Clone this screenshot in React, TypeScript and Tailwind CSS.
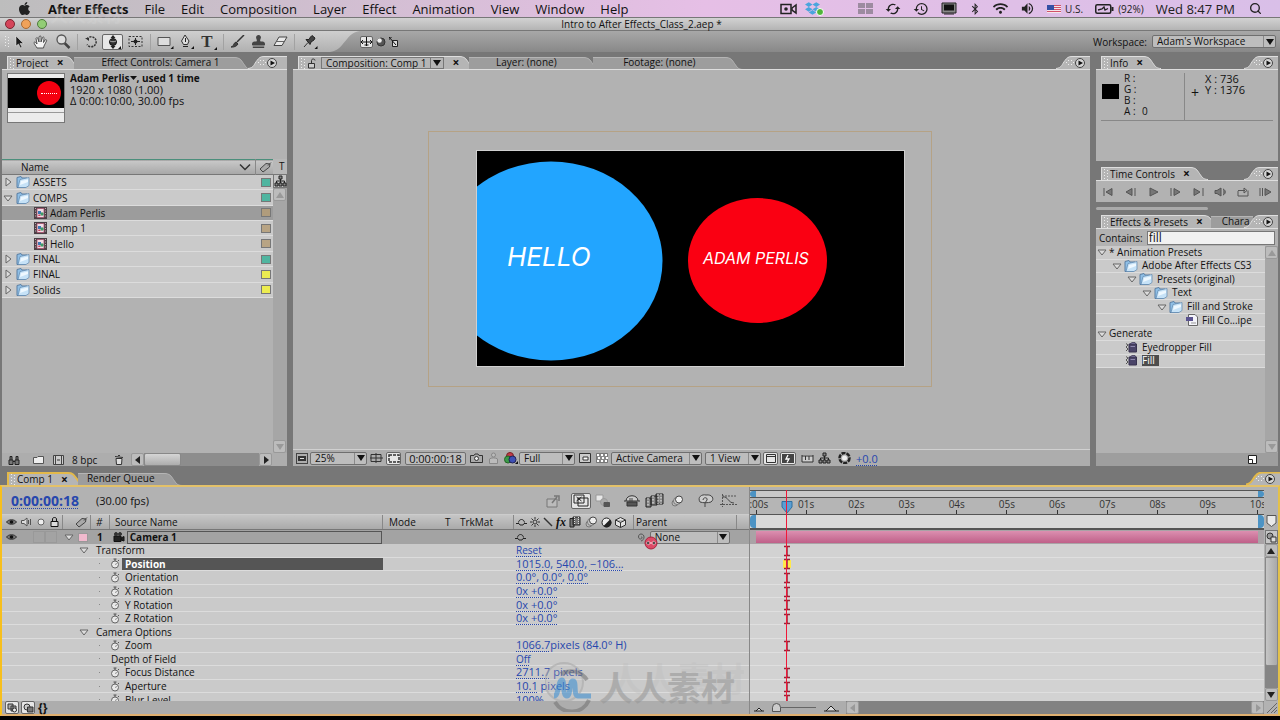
import type { ReactNode } from "react";
import clsx from "clsx";
import { FaApple, FaDropbox, FaBluetoothB, FaStamp, FaWifi } from "react-icons/fa";
import { FiSearch } from "react-icons/fi";
import { IoMdVolumeHigh } from "react-icons/io";
import { MdSync, MdHistory } from "react-icons/md";

const menus = ["File", "Edit", "Composition", "Layer", "Effect", "Animation", "View", "Window", "Help"];

const projectItems = [
  { name: "ASSETS", kind: "folder", open: false, color: "bg-[#4fb5a0]" },
  { name: "COMPS", kind: "folder", open: true, color: "bg-[#4fb5a0]" },
  { name: "Adam Perlis", kind: "comp", color: "bg-[#b09c7c]", selected: true },
  { name: "Comp 1", kind: "comp", color: "bg-[#b8a484]" },
  { name: "Hello", kind: "comp", color: "bg-[#b8a484]" },
  { name: "FINAL", kind: "folder", open: false, color: "bg-[#4fb5a0]" },
  { name: "FINAL", kind: "folder", open: false, color: "bg-[#ecec50]" },
  { name: "Solids", kind: "folder", open: false, color: "bg-[#ecec50]" },
];

const effects = [
  { name: "* Animation Presets", pad: "pl-0", kind: "group" },
  { name: "Adobe After Effects CS3", pad: "pl-[15px]", kind: "folder" },
  { name: "Presets (original)", pad: "pl-[30px]", kind: "folder" },
  { name: "Text", pad: "pl-[45px]", kind: "folder" },
  { name: "Fill and Stroke", pad: "pl-[60px]", kind: "folder" },
  { name: "Fill Co...ipe", pad: "pl-[89px]", kind: "preset" },
  { name: "Generate", pad: "pl-0", kind: "group" },
  { name: "Eyedropper Fill", pad: "pl-[28px]", kind: "effect" },
  { name: "Fill", pad: "pl-[28px]", kind: "effect", selected: true },
];

type Prop = { name: string; kind: "group" | "prop" | "plain"; values?: string[]; tail?: string; key?: boolean; selected?: boolean };

const props: Prop[] = [
  { name: "Transform", kind: "group", values: ["Reset"] },
  { name: "Position", kind: "prop", values: ["1015.0", "540.0", "−106..."], key: true, selected: true },
  { name: "Orientation", kind: "prop", values: ["0.0°", "0.0°", "0.0°"], key: true },
  { name: "X Rotation", kind: "prop", values: ["0x +0.0°"], key: true },
  { name: "Y Rotation", kind: "prop", values: ["0x +0.0°"], key: true },
  { name: "Z Rotation", kind: "prop", values: ["0x +0.0°"], key: true },
  { name: "Camera Options", kind: "group" },
  { name: "Zoom", kind: "prop", values: ["1066.7"], tail: "pixels (84.0° H)", key: true },
  { name: "Depth of Field", kind: "plain", values: ["Off"] },
  { name: "Focus Distance", kind: "prop", values: ["2711.7"], tail: " pixels", key: true },
  { name: "Aperture", kind: "prop", values: ["10.1"], tail: " pixels", key: true },
  { name: "Blur Level", kind: "prop", values: ["100%"], key: true },
];

const seconds = ["0:00s", "01s", "02s", "03s", "04s", "05s", "06s", "07s", "08s", "09s", "10s"];

/* ---------- icons ---------- */

const Icon = ({ w = 14, h = 12, children }: { w?: number; h?: number; children: ReactNode }) => (
  <svg width={w} height={h} viewBox={`0 0 ${w} ${h}`} fill="none" stroke="#333" strokeWidth="1" className="shrink-0">
    {children}
  </svg>
);

const Twirl = ({ open }: { open?: boolean }) => (
  <Icon w={10} h={10}>
    <path d={open ? "M1 3H9L5 8Z" : "M3 1V9L8 5Z"} fill="#dcdcdc" stroke="#666" />
  </Icon>
);

const Folder = () => (
  <Icon w={14} h={12}>
    <path d="M1 1.500L5 .5L6 2H11V10L9 11.500H1Z" fill="#8fbfe6" stroke="#5b7fa3" />
    <path d="M4 3.500L13 1.500V9.500L10 11.500H2Z" fill="#c6e2f7" stroke="#5f87ad" strokeWidth="0.7" />
    <path d="M5 5L12 3.500V6L4 9Z" fill="#eef8ff" stroke="none" />
  </Icon>
);

const CompIcon = () => (
  <Icon w={13} h={12}>
    <path d="M0 0H13V12H0Z" fill="#4a3f45" stroke="none" />
    <path d="M3 1.500H10V10.500H3Z" fill="#f3dce4" stroke="#a5506c" strokeWidth="0.800" />
    <path d="M4 4H7V7H4Z" fill="#3c78b4" stroke="none" />
    <circle cx="8" cy="7" r="1.700" fill="#3f9a66" stroke="none" />
    <path d="M5 7L7 9H4Z" fill="#c9405f" stroke="none" />
    <path d="M1.500 1V11M11.500 1V11" stroke="#b9aeb2" strokeDasharray="1 1.500" />
  </Icon>
);

const PresetIcon = () => (
  <Icon w={12} h={12}>
    <path d="M2.500 .5H9L11.500 3V11.500H2.500Z" fill="#f4f4fa" stroke="#666" />
    <path d="M0 3H7V7H0Z" fill="#5a5390" stroke="none" />
    <path d="M5 9H10" stroke="#999" />
  </Icon>
);

const EffectIcon = () => (
  <Icon w={13} h={11}>
    <path d="M4 2H11.500V10H4Z" fill="#4a4468" stroke="#38334f" />
    <path d="M1 1.500L3 3L1 5L3 7L1 9" stroke="#555" />
    <path d="M5 2L7 .5H10L11 2" fill="#6d6790" stroke="#38334f" strokeWidth="0.700" />
    <path d="M5.500 4.500H10" stroke="#8f89ae" />
  </Icon>
);

const Stopwatch = () => (
  <Icon w={10} h={11}>
    <circle cx="5" cy="6.500" r="3.500" fill="#e9e9e9" stroke="#666" />
    <path d="M5 3V1M3.500 1H6.500M8 3L9 2" stroke="#555" />
    <path d="M5 6.500L7 5.500" stroke="#777" strokeWidth="0.800" />
  </Icon>
);

const Eye = () => (
  <Icon w={11} h={8}>
    <path d="M.5 4C2.500 1 8.500 1 10.500 4C8.500 7 2.500 7 .5 4Z" fill="#777" stroke="#333" />
    <circle cx="5.500" cy="4" r="1.800" fill="#111" stroke="none" />
  </Icon>
);

const TagIcon = () => (
  <Icon w={13} h={11}>
    <path d="M1 7L7 1.500L11 2L10.500 5L4 10Z" fill="#a9a9a9" stroke="#444" />
    <path d="M9 3.500L12 .5" stroke="#444" />
  </Icon>
);

const Shy = () => (
  <Icon w={11} h={8}>
    <path d="M0 5.500H3L4 7H7L8 5.500H11" stroke="#222" />
    <path d="M2.500 4.500C3 .5 8 .5 8.500 4.500" stroke="#222" />
  </Icon>
);

const FilmIcon = () => (
  <Icon w={12} h={12}>
    <path d="M1 2.500H5V11H1ZM4 1H11V9H4Z" fill="#777" stroke="#222" />
    <path d="M5.500 1V9M9.500 1V9" stroke="#ddd" strokeDasharray="1 1" />
  </Icon>
);

const BlurBalls = () => (
  <Icon w={14} h={12}>
    <circle cx="5" cy="8" r="3" fill="#bbb" stroke="#777" />
    <circle cx="7" cy="6" r="3.500" fill="#ccc" stroke="#777" />
    <circle cx="9" cy="4.500" r="3.500" fill="#eee" stroke="#444" />
  </Icon>
);

const FlowChart = () => (
  <Icon w={13} h={12}>
    <path d="M5 1H8V4H5ZM1 8H4V11H1ZM5 8H8V11H5ZM9 8H12V11H9Z" fill="#888" stroke="#222" />
    <path d="M6.500 4V8M2.500 8V6H10.500V8" stroke="#222" />
  </Icon>
);

const Arrow = ({ dir }: { dir: "up" | "down" | "left" | "right" }) => {
  const d = { up: "M4 1L8 7H0Z", down: "M0 1H8L4 7Z", left: "M6 0V8L1 4Z", right: "M2 0V8L7 4Z" };
  return (
    <svg width="8" height="8" viewBox="0 0 8 8" className="shrink-0" fill="currentColor">
      <path d={d[dir]} />
    </svg>
  );
};

/* ---------- shared pieces ---------- */

const Grip = () => (
  <svg width="6" height="11" viewBox="0 0 6 11" className="mx-px shrink-0" fill="#eee">
    {[1, 4, 7, 10].map((y) => (
      <path key={y} d={`M1 ${y - 1}h1v1h-1zM4 ${y}h1v1h-1z`} />
    ))}
  </svg>
);

const Slope = ({ fill = "#b5b5b5", edge = "#dedede" }: { fill?: string; edge?: string }) => (
  <svg width="18" height="13" viewBox="0 0 18 13" className="shrink-0">
    <path d="M0 .5C6 .5 7 3 9.500 6.500C12 10 13 12.500 18 13H0Z" fill={fill} />
    <path d="M0 .5C6 .5 7 3 9.500 6.500C12 10 13 12.500 18 12.500" fill="none" stroke={edge} />
  </svg>
);

const PanelMenu = ({ gold = false, className = "ml-auto" }: { gold?: boolean; className?: string }) => (
  <button aria-label="Panel menu" className={clsx("block h-[13px] shrink-0", className)}>
    <svg width="34" height="13" viewBox="0 0 34 13">
      <path d="M0 13C6 12 6 8 9 4.500C11 2 12 .5 16 .5H34V13Z" fill="#b5b5b5" />
      <path d="M0 12.500C6 12 6 8 9 4.500C11 2 12 .5 16 .5H34" fill="none" stroke={gold ? "#e3b94a" : "#dedede"} strokeWidth={gold ? 2 : 1} />
      <path d="M10 6h1v1h-1zM12 4h1v1h-1zM12 8h1v1h-1zM15 4h1v1h-1zM15 8h1v1h-1zM17 6h1v1h-1z" fill="#eee" />
      <circle cx="24" cy="7" r="4.500" fill="#d5d5d5" stroke="#444" />
      <path d="M22.500 4.500V9.500L27 7Z" fill="#111" />
    </svg>
  </button>
);

const Tab = ({ children }: { children: ReactNode }) => (
  <div className="flex h-[13px] shrink-0">
    <div className="flex items-center border-t border-l border-[#dedede] bg-[#b5b5b5]">
      <Grip />
      {children}
      <button aria-label="Close tab" className="ml-2 text-[12px] leading-3 font-bold">
        ×
      </button>
    </div>
    <Slope />
  </div>
);

const IdleTab = ({ label, className }: { label: string; className?: string }) => (
  <div className="-ml-2 flex h-3">
    <button className={clsx("border-t border-[#b5b5b5] bg-[#9d9d9d] pb-[2px] leading-[9px] whitespace-nowrap", className)}>{label}</button>
    <Slope fill="#9d9d9d" edge="#b5b5b5" />
  </div>
);

const Select = ({ value, label, className }: { value: string; label: string; className?: string }) => (
  <div className={clsx("relative flex h-[13px] shrink-0 items-center rounded-xs border border-[#6f6f6f] bg-[#bdbdbd]", className)}>
    <select aria-label={label} className="h-full w-full appearance-none pr-3 pl-1 leading-[11px] outline-none">
      <option>{value}</option>
    </select>
    <span className="pointer-events-none absolute inset-y-0 right-0 flex w-3 items-center justify-center border-l border-[#8a8a8a]">
      <Arrow dir="down" />
    </span>
  </div>
);

const ToolButton = ({ label, on, children, className }: { label: string; on?: boolean; children: ReactNode; className?: string }) => (
  <button
    aria-label={label}
    className={clsx("flex shrink-0 items-center justify-center", on && "rounded-xs border border-[#666] bg-[#e6e6e6]", className)}
  >
    {children}
  </button>
);

const ScrollButton = ({ dir, dim }: { dir: "up" | "down" | "left" | "right"; dim?: boolean }) => (
  <button
    aria-label={`Scroll ${dir}`}
    className={clsx("flex h-[13px] w-[13px] shrink-0 items-center justify-center rounded-xs border border-[#999] bg-[#bcbcbc]", dim ? "text-[#999]" : "text-[#222]")}
  >
    <Arrow dir={dir} />
  </button>
);

const Link = ({ children, className }: { children: ReactNode; className?: string }) => (
  <a href="#" className={clsx("text-[#2747ad] underline decoration-dotted decoration-1 underline-offset-2", className)}>
    {children}
  </a>
);

/* ---------- top bars ---------- */

const MenuBar = () => (
  <header className="flex h-[18px] items-center border-b border-[#777] bg-linear-to-r from-[#bdbdbd] via-[#e6bfe6] via-55% to-[#d9bfe8] pr-[18px] pl-[17px] text-[13px] font-medium">
    <button aria-label="Apple menu" className="mr-4">
      <FaApple size={15} className="text-[#222]" />
    </button>
    <nav className="flex items-center gap-4">
      <button className="font-bold">After Effects</button>
      {menus.map((m) => (
        <button key={m}>{m}</button>
      ))}
    </nav>
    <div className="ml-auto flex items-center gap-3 text-[#222]">
      <div className="mr-[26px] flex items-center gap-2">
        <Icon w={17} h={12}>
          <path d="M1 1.500H11V10.500H1Z" strokeWidth="1.500" stroke="#222" />
          <circle cx="6" cy="6" r="1.800" fill="#222" stroke="none" />
          <path d="M12 5L16 2V10L12 7Z" fill="none" stroke="#222" strokeWidth="1.500" />
        </Icon>
        <span className="relative">
          <FaDropbox size={15} className="text-[#4aa5dd]" />
          <span className="absolute -right-1 bottom-0 h-2 w-2 rounded-full border border-white bg-[#4fb53a]" />
        </span>
      </div>
      <div className="grid grid-cols-2 gap-px">
        {[0, 1, 2, 3].map((i) => (
          <span key={i} className="h-[5px] w-[7px] bg-[#9c8ba0]" />
        ))}
      </div>
      <MdSync size={16} className="rotate-90" />
      <MdHistory size={16} />
      <Icon w={16} h={13}>
        <path d="M1 1H15V11H1Z" stroke="#222" fill="#888" />
        <path d="M3 2.500H13V8.500H3Z" fill="#111" stroke="none" />
        <path d="M3 12H13" stroke="#222" />
      </Icon>
      <FaBluetoothB size={12} />
      <FaWifi size={15} />
      <IoMdVolumeHigh size={15} />
      <span className="flex items-center gap-1 text-[10px]">
        <Icon w={14} h={8}>
          <path d="M0 0H14V8H0Z" fill="#f4e6ea" stroke="none" />
          <path d="M0 .5H14M0 2.500H14M0 4.500H14M0 6.500H14" stroke="#d2526a" />
          <path d="M0 0H7V5H0Z" fill="#3550a5" stroke="none" />
        </Icon>
        U.S.
      </span>
      <span className="flex items-center gap-1 text-[10px]">
        <Icon w={19} h={10}>
          <rect x=".75" y=".75" width="15" height="8.500" rx="1.500" stroke="#222" strokeWidth="1.500" />
          <path d="M17.500 3V7" stroke="#222" strokeWidth="2" />
          <path d="M3 6L7 5L9 3L10 6L13 4.500" stroke="#222" strokeWidth="1.300" />
        </Icon>
        (92%)
      </span>
      <span className="pr-[2px] text-[13px]">Wed 8:47 PM</span>
      <FiSearch size={13} strokeWidth={2.5} />
    </div>
  </header>
);

const TitleBar = () => (
  <div className="flex h-[13px] items-center border-b border-[#777] bg-linear-to-b from-[#d2d2d2] to-[#b4b4b4] pl-[5px]">
    <div className="flex w-12 gap-[6px]">
      <button aria-label="Close" className="h-[10px] w-[10px] rounded-full border border-[#7b2732] bg-[#d5455a]" />
      <button aria-label="Minimize" className="h-[10px] w-[10px] rounded-full border border-[#a86a33] bg-[#f0a25a]" />
      <button aria-label="Zoom" className="h-[10px] w-[10px] rounded-full border border-[#4f7a3c] bg-[#92cd75]" />
    </div>
    <h1 className="flex-1 pr-[50px] text-center leading-3 font-medium">Intro to After Effects_Class_2.aep *</h1>
  </div>
);

const Divider = () => <span className="mx-[3px] h-4 w-px shrink-0 bg-[#a2a2a2]" />;

const ToolBar = () => (
  <div className="flex h-[21px] items-center bg-linear-to-b from-[#a8a8a8] to-[#888]">
    <div className="flex h-full items-center bg-linear-to-b from-[#cfcfcf] to-[#b0b0b0] pl-[3px]">
      <Grip />
      <ToolButton label="Selection" className="w-[17px]">
        <Icon w={10} h={14}>
          <path d="M1 1V11L3.500 9L5.500 13L7 12L5 8.500H8.500Z" fill="#1c1c1c" stroke="#eee" strokeWidth="0.500" />
        </Icon>
      </ToolButton>
      <ToolButton label="Hand" className="w-[24px]">
        <Icon w={15} h={14}>
          <path d="M4 13C3 11 1 9 1 7.500C1.500 6.500 3 7.500 4 9L3 3.500C3.500 2 5 2.500 5 4L6 7V2C6.500 .5 8 .5 8 2V7L9.500 2.500C10 1.500 11.500 2 11 3.500L10.500 7.500L12 5C13 4 14 5 13.500 6L11 11L10.500 13Z" fill="#f3f3f3" stroke="#444" strokeWidth="0.900" />
        </Icon>
      </ToolButton>
      <ToolButton label="Zoom" className="w-[22px]">
        <Icon w={15} h={15}>
          <path d="M8.500 9L13.500 14" stroke="#444" strokeWidth="2.500" />
          <circle cx="5.500" cy="5.500" r="4.500" fill="#ddd" stroke="#555" strokeWidth="1.300" />
        </Icon>
      </ToolButton>
      <Divider />
      <ToolButton label="Rotate" className="w-[21px]">
        <Icon w={13} h={13}>
          <path d="M2 4A5 5 0 1 1 2 9.500" stroke="#333" strokeWidth="1.500" strokeDasharray="2 1" />
          <path d="M0 3H4V6Z" fill="#333" stroke="none" />
        </Icon>
      </ToolButton>
      <ToolButton label="Orbit camera" on className="h-4 w-[21px]">
        <Icon w={18} h={14}>
          <path d="M9 0L11.500 3H6.500ZM9 14L11.500 11H6.500Z" fill="#222" stroke="none" />
          <circle cx="9" cy="7" r="3.500" fill="#333" stroke="#111" />
          <path d="M6 6C8 7 10 7 12 6" stroke="#ccc" strokeWidth="0.800" />
          <path d="M14 14H17V11Z" fill="#111" stroke="none" />
        </Icon>
      </ToolButton>
      <ToolButton label="Pan behind" className="w-[24px]">
        <Icon w={15} h={13}>
          <path d="M1 1.500H14V11.500H1Z" stroke="#333" strokeDasharray="2 1.500" />
          <circle cx="7.500" cy="6.500" r="2" fill="#222" stroke="none" />
          <path d="M3 6.500H12M7.500 3V10" stroke="#222" />
        </Icon>
      </ToolButton>
      <Divider />
      <ToolButton label="Rectangle" className="w-[22px]">
        <Icon w={17} h={14}>
          <path d="M1 2.500H13V10.500H1Z" fill="#ddd" stroke="#555" />
          <path d="M13.500 14H16.500V11Z" fill="#111" stroke="none" />
        </Icon>
      </ToolButton>
      <ToolButton label="Pen" className="w-[22px]">
        <Icon w={15} h={14}>
          <path d="M5 0L9 6L7.500 9.500H3.500L1.500 6Z" fill="#ddd" stroke="#333" />
          <path d="M5.500 3V7M3 11.500H8" stroke="#222" />
          <path d="M11 14H14V11Z" fill="#111" stroke="none" />
        </Icon>
      </ToolButton>
      <button aria-label="Type" className="flex w-[22px] items-end justify-center font-['Liberation_Serif',serif] text-[17px] leading-4 font-bold text-[#333]">
        T
        <svg width="3" height="3" viewBox="0 0 3 3" className="ml-px">
          <path d="M0 3H3V0Z" fill="#111" />
        </svg>
      </button>
      <Divider />
      <ToolButton label="Brush" className="w-[21px]">
        <Icon w={15} h={13}>
          <path d="M14 0L7 7" stroke="#333" strokeWidth="1.500" />
          <path d="M1 12C4 12 3 8 6 7L8 9C7 11 4 12.500 1 12Z" fill="#444" stroke="#333" />
        </Icon>
      </ToolButton>
      <ToolButton label="Clone stamp" className="w-[21px]">
        <FaStamp size={13} className="text-[#444]" />
      </ToolButton>
      <ToolButton label="Eraser" className="w-[22px]">
        <Icon w={15} h={11}>
          <path d="M6 1H14L9 9.500H1Z" fill="#e8e8e8" stroke="#444" />
          <path d="M3.500 5.500H11.500" stroke="#666" />
        </Icon>
      </ToolButton>
      <Divider />
      <ToolButton label="Puppet pin" className="w-[26px]">
        <Icon w={16} h={14}>
          <path d="M1 12L5 7.500" stroke="#333" />
          <path d="M3 4.500L7 9.500L8 7L11 5L12 3L9 .5L7.500 2L6 4.500Z" fill="#444" stroke="#222" />
          <path d="M11.500 14H14.500V11Z" fill="#111" stroke="none" />
        </Icon>
      </ToolButton>
    </div>
    <svg width="36" height="21" viewBox="0 0 36 21" className="shrink-0">
      <defs>
        <linearGradient id="bar" x1="0" y1="0" x2="0" y2="1">
          <stop offset="0" stopColor="#cfcfcf" />
          <stop offset="1" stopColor="#b0b0b0" />
        </linearGradient>
      </defs>
      <path d="M0 0H36C22 1 20 20 6 21H0Z" fill="url(#bar)" />
    </svg>
    <ToolButton label="Local axis" on className="h-3 w-[13px]">
      <Icon w={11} h={10}>
        <path d="M5.500 0V9M0 5H11M2 3L0 5L2 7M9 3L11 5L9 7M3.500 8H7.500" stroke="#111" />
      </Icon>
    </ToolButton>
    <ToolButton label="World axis" className="w-[15px]">
      <Icon w={10} h={10}>
        <circle cx="5" cy="5" r="4" fill="#555" stroke="#333" />
        <circle cx="3.500" cy="3.500" r="2.300" fill="#eee" stroke="none" />
      </Icon>
    </ToolButton>
    <ToolButton label="View axis" className="w-[12px]">
      <Icon w={10} h={10}>
        <path d="M3.500 3.500H8.500V9.500H3.500Z" fill="#ddd" stroke="#222" />
        <path d="M0 0L7 8M0 3V0H3" stroke="#111" />
      </Icon>
    </ToolButton>
    <label className="ml-auto flex items-center gap-[5px] pr-1">
      Workspace:
      <Select label="Workspace" value="Adam's Workspace" className="w-[124px]" />
    </label>
  </div>
);

/* ---------- project panel ---------- */

const ProjectPanel = () => (
  <section className="flex w-[285px] shrink-0 flex-col">
    <div className="flex h-[13px] items-end pl-[5px]">
      <Tab>Project</Tab>
      <IdleTab label="Effect Controls: Camera 1" className="w-[160px] pl-[14px]" />
      <PanelMenu className="-ml-1" />
      <span className="h-[13px] flex-1 border-t border-[#dedede] bg-[#b5b5b5]" />
    </div>
    <div className="flex min-h-0 flex-1 flex-col border-t border-[#dedede] bg-[#b2b2b2]">
      <div className="flex h-[89px] gap-[5px] pt-[3px] pl-[5px]">
        <div className="flex h-[50px] w-[58px] flex-col border border-[#777] bg-[#ececec]">
          <div className="mt-1 flex h-[30px] items-center justify-end bg-black pr-[3px]">
            <div className="flex h-6 w-6 items-center justify-center rounded-full bg-[#f50010]">
              <span className="w-4 border-t border-dotted border-white" />
            </div>
          </div>
          <div className="mt-1 h-px bg-[#999]" />
        </div>
        <div className="text-[11px] leading-[11px]">
          <p className="flex items-center text-[10px] font-bold">
            Adam Perlis
            <svg width="7" height="5" viewBox="0 0 7 5" fill="#111">
              <path d="M0 0H7L3.500 4Z" />
            </svg>
            , used 1 time
          </p>
          <p>1920 x 1080 (1.00)</p>
          <p>Δ 0:00:10:00, 30.00 fps</p>
        </div>
      </div>
      <div className="flex min-h-0 flex-1">
        <div className="min-w-0 flex-1 overflow-hidden">
          <table className="w-full table-fixed border-collapse text-left">
            <thead>
              <tr className="h-[15px] border-t border-b border-t-[#4c8f7c] border-b-[#777] bg-linear-to-b from-[#c8c8c8] to-[#a8a8a8]">
                <th className="border-r border-[#888] p-0 pl-[19px] font-medium">
                  <span className="flex items-center justify-between pr-1 leading-[13px]">
                    Name
                    <Icon w={12} h={8}>
                      <path d="M1 1.500L6 6.500L11 1.500" strokeWidth="1.500" />
                    </Icon>
                  </span>
                </th>
                <th className="w-[18px] p-0 pl-[3px]" aria-label="Label">
                  <TagIcon />
                </th>
              </tr>
            </thead>
          </table>
          <table className="h-[123px] w-full table-fixed border-collapse">
            <tbody>
              {projectItems.map((item, i) => (
                <tr key={i} className={clsx("border-b border-[#dcdcdc]", item.selected ? "bg-[#9c9c9c]" : "bg-[#cacaca]")}>
                  <td className="p-0">
                    <span className={clsx("flex items-center gap-[3px] leading-[14px]", item.kind === "folder" ? "pl-px" : "pl-[32px]")}>
                      {item.kind === "folder" ? (
                        <>
                          <Twirl open={item.open} />
                          <Folder />
                        </>
                      ) : (
                        <CompIcon />
                      )}
                      {item.name}
                    </span>
                  </td>
                  <td className="w-3 p-0">
                    <span className={clsx("block h-[9px] w-[10px] border border-[#777]", item.color)} />
                  </td>
                </tr>
              ))}
            </tbody>
          </table>
        </div>
        <div className="flex w-[14px] flex-col bg-[#a6a6a6]">
          <div className="h-[15px] bg-[#b8b8b8] pl-[6px] leading-[15px] font-medium">T</div>
          <ToolButton label="Flowchart" className="h-[14px] border border-[#777] bg-[#c4c4c4]">
            <FlowChart />
          </ToolButton>
          <ScrollButton dir="up" dim />
          <div className="flex-1" />
          <ScrollButton dir="down" dim />
        </div>
      </div>
      <div className="flex h-[13px] items-center bg-[#adadad] pl-[5px]">
        <ToolButton label="Find" className="w-[14px]">
          <Icon w={12} h={10}>
            <path d="M1 5H5V9.500H1ZM7 5H11V9.500H7ZM2 5V1.500H4V5M8 5V1.500H10V5M5 6.500H7" fill="#777" stroke="#222" />
          </Icon>
        </ToolButton>
        <ToolButton label="New folder" className="ml-3 w-[10px]">
          <Icon w={11} h={9}>
            <path d="M.5 2.500H4L5 1.500H10.500V8.500H.5Z" fill="#eee" stroke="#555" />
          </Icon>
        </ToolButton>
        <ToolButton label="New composition" className="mr-2 ml-[10px] w-[11px]">
          <Icon w={11} h={10}>
            <path d="M.5 .5H10.500V9.500H.5ZM2.500 .5V9.500M8.500 .5V9.500" fill="#ccc" stroke="#444" />
            <path d="M4 5H7" />
          </Icon>
        </ToolButton>
        8 bpc
        <ToolButton label="Delete" className="mr-[7px] ml-[18px] w-[9px]">
          <Icon w={9} h={10}>
            <path d="M1 3.500H7L6.500 9.500H1.500Z" fill="#ddd" stroke="#333" />
            <path d="M0 1.500L8 2.500M3 .5H5" stroke="#333" />
          </Icon>
        </ToolButton>
        <ScrollButton dir="left" />
        <div className="h-[13px] flex-1 bg-[#8d8d8d]">
          <div className="h-[13px] w-[37px] rounded-xs border border-[#888] bg-linear-to-b from-[#d5d5d5] to-[#adadad]" />
        </div>
        <ScrollButton dir="right" />
        <div className="w-[15px]" />
      </div>
    </div>
  </section>
);

/* ---------- composition viewer ---------- */

const CompPanel = () => (
  <section className="flex min-w-0 flex-1 flex-col">
    <div className="flex h-[13px] items-end pl-[5px]">
      <Tab>
        <Icon w={9} h={11}>
          <path d="M1.500 5.500H7.500V10H1.500Z" fill="#ccc" />
          <path d="M4.500 5V2.500C4.500 .5 8 .5 8 2.500" />
        </Icon>
        <button className="ml-[5px] flex h-3 items-center border border-[#777] pl-1 leading-[10px]">
          Composition: Comp 1
          <span className="ml-1 flex h-full items-center border-l border-[#777] px-[2px]">
            <Arrow dir="down" />
          </span>
        </button>
      </Tab>
      <IdleTab label="Layer: (none)" className="w-[114px]" />
      <IdleTab label="Footage: (none)" className="w-[132px]" />
      <PanelMenu />
    </div>
    <div className="flex min-h-0 flex-1 flex-col border-t border-[#dedede] bg-[#b2b2b2]">
      <div className="flex min-h-0 flex-1 items-center justify-center pr-6 pb-[2px]">
        <svg width="504" height="256" viewBox="0 0 504 256" fontFamily="Inter, sans-serif" fontStyle="italic" fontWeight="400" fill="#fff">
          <rect x=".5" y=".5" width="503" height="255" fill="none" stroke="#b5a285" />
          <clipPath id="stage">
            <rect x="49" y="20" width="428" height="216" />
          </clipPath>
          <rect x="48.500" y="19.500" width="428" height="216" fill="#000" stroke="#d0d0d0" />
          <g clipPath="url(#stage)">
            <ellipse cx="123" cy="130" rx="111.500" ry="99.500" fill="#22a5ff" />
            <ellipse cx="329.500" cy="129.500" rx="69.500" ry="62.500" fill="#fa0012" />
            <text x="79" y="135" fontSize="26">
              HELLO
            </text>
            <text x="275" y="133" fontSize="16">
              ADAM PERLIS
            </text>
          </g>
        </svg>
      </div>
      <div className="flex h-[17px] items-center border-t border-[#d0d0d0] bg-[#adadad] pl-[3px]">
        <ToolButton label="Always preview" className="h-[11px] w-3 border border-[#444]">
          <Icon w={8} h={7}>
            <path d="M0 1H8V6H0Z" fill="#333" stroke="none" />
            <path d="M2 3.500H6" stroke="#ddd" />
          </Icon>
        </ToolButton>
        <Select label="Magnification" value="25%" className="ml-[2px] w-[57px]" />
        <ToolButton label="Grid" className="ml-[3px]">
          <Icon w={13} h={10}>
            <path d="M1 1.500H11V8.500H1ZM6 0V10M0 5H13" />
          </Icon>
        </ToolButton>
        <ToolButton label="Mask outline" on className="mr-1 ml-[3px] h-[13px] w-[15px]">
          <Icon w={12} h={9}>
            <path d="M1 1H11V8H1Z" strokeDasharray="3 1" strokeWidth="1.500" />
          </Icon>
        </ToolButton>
        <button className="h-[13px] w-[61px] rounded-xs border border-[#6f6f6f] bg-[#bdbdbd] text-center text-[11px] leading-[11px]">0:00:00:18</button>
        <ToolButton label="Snapshot" className="ml-1">
          <Icon w={13} h={10}>
            <path d="M.5 2.500H4L5 1H8L9 2.500H12.500V9.500H.5Z" fill="#aaa" />
            <circle cx="6.500" cy="5.500" r="2" fill="#eee" />
          </Icon>
        </ToolButton>
        <ToolButton label="Show snapshot" className="ml-[5px]">
          <Icon w={11} h={12}>
            <circle cx="5.500" cy="3" r="2" stroke="#888" fill="#bbb" />
            <path d="M1.500 11.500V7C3 5.500 8 5.500 9.500 7V11.500Z" stroke="#888" fill="#bbb" />
          </Icon>
        </ToolButton>
        <ToolButton label="Show channel" className="mr-px ml-[5px]">
          <Icon w={14} h={12}>
            <circle cx="6" cy="4" r="3.500" fill="#c23a4a" stroke="#722" />
            <circle cx="4" cy="7.500" r="3.500" fill="#3a9a4a" stroke="#262" />
            <circle cx="8.500" cy="7.500" r="3.500" fill="#3d4fb5" stroke="#225" />
            <path d="M11 12H14V9Z" fill="#111" stroke="none" />
          </Icon>
        </ToolButton>
        <Select label="Resolution" value="Full" className="w-[56px]" />
        <ToolButton label="Region of interest" className="ml-1">
          <Icon w={12} h={10}>
            <path d="M.5 .5H11.500V9.500H.5Z" fill="#ccc" />
            <path d="M4 4H9V7H4Z" fill="#fff" />
          </Icon>
        </ToolButton>
        <ToolButton label="Transparency grid" className="mr-[3px] ml-[5px]">
          <Icon w={12} h={10}>
            <path d="M.5 .5H11.500V9.500H.5Z" fill="#888" stroke="#777" />
            <path d="M1 2H11M2 5H12M1 8H11" stroke="#fff" strokeWidth="2" strokeDasharray="2 2" />
          </Icon>
        </ToolButton>
        <Select label="3D view" value="Active Camera" className="w-[91px]" />
        <Select label="View layout" value="1 View" className="ml-[3px] w-[56px]" />
        <ToolButton label="Pixel aspect" on className="ml-[2px] h-[13px] w-[15px]">
          <Icon w={10} h={9}>
            <path d="M.5 .5H9.500V8.500H.5ZM.5 2.500H9.500" />
          </Icon>
        </ToolButton>
        <ToolButton label="Fast previews" on className="ml-[2px] h-[13px] w-4">
          <Icon w={12} h={9}>
            <path d="M0 0H12V9H0Z" fill="#444" stroke="none" />
            <path d="M6 1L4 5H7L5 8.500" stroke="#fff" strokeWidth="1.300" />
          </Icon>
        </ToolButton>
        <ToolButton label="Timeline" className="ml-[5px]">
          <Icon w={13} h={9}>
            <path d="M1 1V8H12V1M4.500 2V6M8 2V6M1 2H12" fill="#ccc" />
          </Icon>
        </ToolButton>
        <ToolButton label="Flowchart" className="ml-1">
          <FlowChart />
        </ToolButton>
        <ToolButton label="Exposure" className="mr-[5px] ml-[7px]">
          <Icon w={13} h={12}>
            <circle cx="6.500" cy="6" r="5" strokeWidth="2.500" strokeDasharray="4 1" stroke="#222" />
            <circle cx="6.500" cy="6" r="2.500" fill="#eee" stroke="none" />
          </Icon>
        </ToolButton>
        <Link className="text-[11px] leading-[11px]">+0.0</Link>
      </div>
    </div>
  </section>
);

/* ---------- right column ---------- */

const InfoPanel = () => (
  <section>
    <div className="flex h-[13px] items-end pl-[5px]">
      <Tab>Info</Tab>
      <PanelMenu />
    </div>
    <div className="h-[92px] border-t border-[#dedede] bg-[#b2b2b2] px-[5px] pt-[3px]">
      <div className="flex h-12 border-b border-[#888] pl-px leading-[11px]">
        <span className="mt-[11px] h-[15px] w-[17px] bg-black" />
        <dl className="ml-[5px] grid w-[61px] grid-cols-[18px_1fr] content-start border-r border-[#888]">
          <dt>R :</dt>
          <dd />
          <dt>G :</dt>
          <dd />
          <dt>B :</dt>
          <dd />
          <dt>A :</dt>
          <dd>0</dd>
        </dl>
        <span className="ml-[6px] pt-[14px] text-[14px]">+</span>
        <div className="ml-[6px] text-[11px]">
          <p>X : 736</p>
          <p>Y : 1376</p>
        </div>
      </div>
    </div>
  </section>
);

const transport = [
  { label: "First frame", d: "M2 2V10M10 2.500V9.500L4 6Z" },
  { label: "Previous frame", d: "M8 2.500V9.500L2 6ZM11 2V10" },
  { label: "Play", d: "M3 2V10L11 6Z" },
  { label: "Next frame", d: "M2 2V10M5 2.500V9.500L11 6Z" },
  { label: "Last frame", d: "M2 2.500V9.500L8 6ZM11 2V10" },
  { label: "Audio", d: "M1 4.500H3L7 2V10L3 7.500H1ZM9 3C12 4 12 8 9 9" },
  { label: "Loop", d: "M1 5V10H11V4.500M1 4.500H8M7 2V7L10 4.500Z" },
  { label: "RAM preview", d: "M1 2V10M3.500 2V10M6 2.500V9.500L12 6Z" },
];

const TimeControls = () => (
  <section>
    <div className="flex h-[13px] items-end pl-[5px]">
      <Tab>Time Controls</Tab>
      <PanelMenu />
    </div>
    <div className="flex h-[22px] items-center justify-between border-t border-[#dedede] bg-[#b2b2b2] px-[6px]">
      {transport.map((t) => (
        <ToolButton key={t.label} label={t.label}>
          <Icon w={13} h={12}>
            <path d={t.d} fill={t.label === "Loop" ? "none" : "#777"} stroke="#555" />
          </Icon>
        </ToolButton>
      ))}
    </div>
  </section>
);

const EffectsPanel = () => (
  <section className="flex min-h-0 flex-1 flex-col">
    <div className="flex h-[13px] items-end pl-[5px]">
      <Tab>Effects & Presets</Tab>
      <button className="-ml-[10px] h-3 flex-1 border-t border-[#b5b5b5] bg-[#9d9d9d] pb-[2px] pl-[11px] text-left leading-[9px]">Chara</button>
      <PanelMenu className="-ml-[9px]" />
    </div>
    <div className="flex min-h-0 flex-1 flex-col border-t border-[#dedede] bg-[#b2b2b2]">
      <label className="flex h-[17px] items-center gap-1 pr-[3px] pl-[3px]">
        Contains:
        <input defaultValue="fill" className="h-[14px] min-w-0 flex-1 border border-[#777] bg-[#f1f1f1] px-px text-[12px] leading-3 outline-none" />
      </label>
      <div className="flex min-h-0 flex-1">
        <ul className="flex h-[122px] min-w-0 flex-1 flex-col">
          {effects.map((e, i) => (
            <li key={i} className="flex min-h-0 flex-1 items-center border-b border-[#dcdcdc] bg-[#cacaca] pl-px whitespace-nowrap">
              <span className={clsx("flex items-center gap-[2px]", e.pad)}>
                {(e.kind === "group" || e.kind === "folder") && <Twirl open />}
                {e.kind === "folder" && <Folder />}
                {e.kind === "preset" && <PresetIcon />}
                {e.kind === "effect" && <EffectIcon />}
                <span className={clsx("leading-[11px]", e.kind !== "group" && "ml-[2px]", e.selected && "bg-[#4d4d4d] pr-1 text-white")}>{e.name}</span>
              </span>
            </li>
          ))}
        </ul>
        <div className="flex w-[13px] flex-col justify-between bg-[#a6a6a6]">
          <ScrollButton dir="up" dim />
          <ScrollButton dir="down" dim />
        </div>
      </div>
      <div className="flex h-[13px] items-center justify-end bg-[#9e9e9e] pr-[21px]">
        <ToolButton label="New preset">
          <Icon w={9} h={9}>
            <path d="M.5 .5H8.500V8.500H.5Z" fill="#fff" stroke="#222" />
            <path d="M.5 4.500H4.500V8.500" stroke="#222" />
          </Icon>
        </ToolButton>
      </div>
    </div>
  </section>
);

/* ---------- timeline ---------- */

const PropRow = ({ p }: { p: Prop }) => (
  <div className="flex min-h-0 flex-1 items-center border-b border-[#dcdcdc] bg-[#cacaca]">
    <div className="flex w-[514px] items-center">
      {p.kind === "group" ? (
        <div className="flex items-center gap-[7px] pl-[77px]">
          <Twirl open />
          {p.name}
        </div>
      ) : (
        <div className="flex w-[381px] items-center pl-[97px]">
          <span className="h-px w-px bg-[#888]" />
          {p.kind === "prop" ? (
            <>
              <span className="mr-[5px] ml-[10px]">
                <Stopwatch />
              </span>
              <span className={clsx("flex-1", p.selected && "-ml-[3px] bg-[#555] pl-[3px] leading-3 font-bold text-white")}>{p.name}</span>
            </>
          ) : (
            <span className="ml-[11px]">{p.name}</span>
          )}
        </div>
      )}
    </div>
    <div className={clsx("leading-3 whitespace-pre text-[#2747ad]", p.kind === "prop" && "text-[11px]")}>
      {p.values?.map((v, i) => (
        <span key={i}>
          {i > 0 && ", "}
          <Link>{v}</Link>
        </span>
      ))}
      {p.tail}
    </div>
  </div>
);

const SwitchHeader = () => (
  <div className="flex w-[120px] items-center gap-[3px] border-l border-[#888] pl-[2px]">
    <Shy />
    <Icon w={10} h={10}>
      <circle cx="5" cy="5" r="2" />
      <path d="M5 0V2M5 8V10M0 5H2M8 5H10M1.500 1.500L3 3M7 7L8.500 8.500M8.500 1.500L7 3M3 7L1.500 8.500" />
    </Icon>
    <Icon w={10} h={10}>
      <path d="M1 1L9 9" strokeWidth="1.500" />
    </Icon>
    <span className="w-[10px] font-['Liberation_Serif',serif] text-[12px] font-bold italic">fx</span>
    <FilmIcon />
    <BlurBalls />
    <Icon w={11} h={11}>
      <circle cx="5.500" cy="5.500" r="4.500" fill="#eee" stroke="#222" />
      <path d="M2.500 9A4.500 4.500 0 0 0 9 2.500Z" fill="#222" stroke="none" />
    </Icon>
    <Icon w={11} h={11}>
      <path d="M5.500 .5L10.500 3V8L5.500 10.500L.5 8V3ZM.5 3L5.500 5.500L10.500 3M5.500 5.500V10.500" fill="#e3e3e3" />
    </Icon>
  </div>
);

const Outline = () => (
  <div className="flex w-[748px] shrink-0 flex-col border-r border-[#888]">
    <div className="flex h-[27px] items-center bg-[#b2b2b2] pl-[9px]">
      <Link className="w-[71px] text-[14px] leading-[14px] font-bold">0:00:00:18</Link>
      <span className="ml-[14px] text-[11px]">(30.00 fps)</span>
      <div className="ml-auto flex items-center pr-[12px]">
        <ToolButton label="Open parent" className="mr-[10px]">
          <Icon w={15} h={14}>
            <path d="M1 5H11V13H1Z" fill="#bbb" stroke="#777" />
            <path d="M6 9L11 3M8 2H13V7" stroke="#777" strokeWidth="1.500" />
          </Icon>
        </ToolButton>
        <ToolButton label="Live update" on className="h-4 w-5">
          <Icon w={16} h={13}>
            <path d="M1 1H11V9H1ZM5 4H15V12H5Z" stroke="#222" />
            <path d="M3.500 3L8.500 7M8.500 3L3.500 7" stroke="#222" />
          </Icon>
        </ToolButton>
        <ToolButton label="Draft 3D" className="ml-1">
          <Icon w={17} h={14}>
            <path d="M1 1H8V7H1Z" fill="#e8e8e8" stroke="#999" />
            <circle cx="9" cy="8" r="3.500" fill="#aaa" stroke="#999" />
            <path d="M9 8.500H14.500V12.500H9Z" fill="#555" stroke="#555" />
          </Icon>
        </ToolButton>
        <ToolButton label="Hide shy" className="ml-[12px]">
          <Icon w={16} h={14}>
            <path d="M2 7C2 0 14 0 14 7M0 7H16" stroke="#333" fill="#ccc" />
            <path d="M3 8H13V12H3Z" fill="#555" />
            <path d="M6 8V4M8 8V4" stroke="#444" />
          </Icon>
        </ToolButton>
        <ToolButton label="Frame blending" className="ml-[5px]">
          <Icon w={19} h={15}>
            <path d="M1 5H6V14H1ZM6 3H12V12H6ZM11 1H18V11H11Z" fill="#888" stroke="#222" />
            <path d="M3 5V14M8 3V12M13 1V11M16 1V11" stroke="#eee" strokeDasharray="1.500 1.500" />
          </Icon>
        </ToolButton>
        <ToolButton label="Motion blur" className="ml-[6px]">
          <BlurBalls />
        </ToolButton>
        <ToolButton label="Brainstorm" className="ml-[14px]">
          <Icon w={16} h={14}>
            <path d="M2 8C-1 3 4 0 8 1C14 0 17 5 13 8C10 9 5 9 2 8ZM7 9V13" fill="#ccc" stroke="#444" />
            <path d="M5 6C5 3 10 3 9 6L7 9" stroke="#444" />
          </Icon>
        </ToolButton>
        <ToolButton label="Graph editor" className="ml-[6px]">
          <Icon w={17} h={13}>
            <path d="M2.500 0V13M0 10.500H17M2 2H16" stroke="#555" strokeDasharray="2 1" />
            <path d="M3 3C8 2 8 9 14 9" stroke="#444" />
          </Icon>
        </ToolButton>
      </div>
    </div>
    <div className="flex h-4 items-stretch border-y border-t-[#ccc] border-b-[#777] bg-linear-to-b from-[#c6c6c6] to-[#aaa] leading-[15px] font-medium">
      <div className="flex w-[61px] items-center gap-1 border-r border-[#888] pl-1">
        <Eye />
        <Icon w={11} h={10}>
          <path d="M.5 3.500H3L6 1V9L3 6.500H.5ZM7.500 3V7M9.500 2V8" fill="#ddd" stroke="#555" />
        </Icon>
        <Icon w={10} h={10}>
          <circle cx="5" cy="5" r="3" fill="#eee" stroke="#666" />
        </Icon>
        <Icon w={9} h={10}>
          <path d="M1 4.500H8V9.500H1Z" fill="#ddd" stroke="#111" />
          <path d="M2.500 4V2C2.500 0 6.500 0 6.500 2V4" stroke="#111" />
        </Icon>
      </div>
      <div className="flex w-[28px] items-center justify-end border-r border-[#888] pr-[2px]">
        <TagIcon />
      </div>
      <div className="w-[19px] border-r border-[#888] pl-[5px] italic">#</div>
      <div className="w-[273px] border-r border-[#888] pl-[5px]">Source Name</div>
      <div className="w-[55px] pl-[6px]">Mode</div>
      <div className="w-4 pl-[7px]">T</div>
      <div className="flex-1 pl-[6px]">TrkMat</div>
      <SwitchHeader />
      <div className="w-[104px] border-x border-[#888] pl-[2px]">Parent</div>
      <div className="w-[12px]" />
    </div>
    <div className="flex h-[14px] items-center bg-[#a3a3a3] pl-1">
      <Eye />
      <span className="ml-4 h-3 w-3 border border-[#999]" />
      <span className="h-3 w-3 border border-[#999]" />
      <span className="ml-[7px]">
        <Twirl open />
      </span>
      <span className="ml-1 h-[9px] w-[10px] border border-[#999] bg-[#f0b9cd]" />
      <span className="ml-[9px] font-bold">1</span>
      <span className="mr-[2px] ml-[10px]">
        <Icon w={12} h={10}>
          <path d="M1 4H8V9.500H1ZM8 6L11 4.500V9L8 8" fill="#222" stroke="#111" />
          <circle cx="3" cy="2" r="1.500" fill="#333" />
          <circle cx="7" cy="2" r="1.500" fill="#333" />
        </Icon>
      </span>
      <span className="h-[13px] w-[255px] border border-[#555] pl-[2px] leading-[11px] font-bold">Camera 1</span>
      <span className="ml-[133px]">
        <Shy />
      </span>
      <span className="mr-1 ml-[110px]">
        <Icon w={10} h={10}>
          <path d="M5 5C6.500 4.500 6.500 7 4.500 7C1.500 7 2 2 5 2C9 2 9 8 5 9" stroke="#555" />
        </Icon>
      </span>
      <Select label="Parent" value="None" className="w-[80px]" />
    </div>
    <div className="min-h-0 flex-1 overflow-hidden bg-[#cacaca]">
      <div className="flex h-[163px] flex-col">
        {props.map((p, i) => (
          <PropRow key={i} p={p} />
        ))}
      </div>
    </div>
    <div className="flex h-[13px] shrink-0 items-center gap-[2px] bg-[#adadad] pl-[3px]">
      <ToolButton label="Toggle switches" on className="h-[13px] w-[14px]">
        <Icon w={11} h={10}>
          <path d="M1 1H6V6H1ZM4 3H9V8H4Z" fill="#aaa" />
          <circle cx="7.500" cy="7" r="2" fill="#eee" />
        </Icon>
      </ToolButton>
      <ToolButton label="Toggle modes" on className="h-[13px] w-[14px]">
        <Icon w={11} h={10}>
          <circle cx="4" cy="4" r="3" fill="#ccc" />
          <path d="M4.500 4H10V9H4.500Z" fill="#777" />
        </Icon>
      </ToolButton>
      <button aria-label="Toggle in and out" className="ml-px text-[12px] leading-3 font-bold">
        {"{}"}
      </button>
    </div>
  </div>
);

const KeyMark = ({ hot }: { hot?: boolean }) => (
  <svg width="8" height="12" viewBox="0 0 8 12">
    {hot && <path d="M0 2H3V10H0ZM5 2H8V10H5Z" fill="#ffe94a" />}
    <path d="M1 1.500H3.500L4 2.500L4.500 1.500H7M1 10.500H3.500L4 9.500L4.500 10.500H7M4 2V10" stroke="#9b2036" strokeWidth="1.500" fill="none" />
  </svg>
);

const Graph = () => (
  <div className="relative flex min-w-0 flex-1 flex-col overflow-hidden">
    <div className="mt-[3px] flex h-2 justify-between border-y border-[#555] bg-[#c9c9c9]">
      <span className="w-[6px] rounded-l-sm bg-[#4c93c4]" />
      <span className="w-[6px] rounded-r-sm bg-[#4c93c4]" />
    </div>
    <div className="-mx-[6px] flex h-4 justify-between bg-[#b5b5b5]">
      {seconds.map((s) => (
        <div key={s} className="flex w-6 flex-col items-center text-[#333]">
          <span className="leading-3">{s}</span>
          <span className="h-1 w-px bg-[#333]" />
        </div>
      ))}
    </div>
    <div className="flex h-4 justify-between border-t border-b-2 border-[#555] bg-[#d9d9d9]">
      <span className="w-[6px] rounded-l-sm bg-[#4c93c4]" />
      <span className="w-[6px] rounded-r-sm bg-[#4c93c4]" />
    </div>
    <div className="h-[14px] bg-[#a9a3a6] px-[6px] pt-px">
      <div className="h-3 bg-linear-to-b from-[#dc8fb0] to-[#bf6089]" />
    </div>
    <div className="min-h-0 flex-1 overflow-hidden bg-[#d2d2d2]">
      <div className="flex h-[163px] flex-col">
        {props.map((_, i) => (
          <div key={i} className="flex-1 border-b border-[#dfdfdf]" />
        ))}
      </div>
    </div>
    {/* playhead and keyframe marks over the layer rows */}
    <div className="pointer-events-none absolute top-[3px] bottom-[13px] left-[6%] flex w-3 flex-col items-center overflow-hidden">
      <svg width="12" height="14" viewBox="0 0 12 14" className="relative mt-[10px] shrink-0">
        <path d="M1 1.500H11V7L6 13L1 7Z" fill="#5a9fd4" stroke="#2f6f9f" />
      </svg>
      <div className="relative mt-[30px] flex h-[163px] shrink-0 flex-col">
        {props.map((p, i) => (
          <div key={i} className="flex min-h-0 flex-1 items-center">
            {(p.key || i === 0) && <KeyMark hot={p.selected} />}
          </div>
        ))}
      </div>
      <span className="absolute inset-y-0 left-[5px] w-px bg-[#f01838]" />
    </div>
    <div className="flex h-[13px] shrink-0 items-center bg-[#adadad] pl-1">
      <Icon w={10} h={8}>
        <path d="M0 7H10M2 7L5 4L8 7" stroke="#222" fill="#ddd" />
      </Icon>
      <div className="mx-2 flex h-[13px] w-[44px] items-center">
        <input
          type="range"
          aria-label="Timeline zoom"
          defaultValue={0}
          className="h-px w-full appearance-none bg-[#666] [&::-webkit-slider-thumb]:h-[9px] [&::-webkit-slider-thumb]:w-[9px] [&::-webkit-slider-thumb]:appearance-none [&::-webkit-slider-thumb]:rounded-t-full [&::-webkit-slider-thumb]:border [&::-webkit-slider-thumb]:border-[#555] [&::-webkit-slider-thumb]:bg-[#ccc]"
        />
      </div>
      <Icon w={15} h={9}>
        <path d="M0 8H15M2 8L7 3L12 8" stroke="#222" fill="#ddd" />
      </Icon>
      <div className="ml-[7px] flex flex-1 justify-between bg-[#828282]">
        <ScrollButton dir="left" dim />
        <ScrollButton dir="right" dim />
      </div>
    </div>
  </div>
);

const Timeline = () => (
  <section className="flex h-[244px] shrink-0 flex-col">
    <div className="flex h-[13px] items-end pl-[7px]">
      <div className="flex h-[13px] shrink-0">
        <div className="flex items-center border-t-2 border-l-2 border-[#e3b94a] bg-[#b5b5b5] leading-[11px]">
          <Grip />
          Comp 1
          <button aria-label="Close tab" className="ml-2 text-[12px] leading-[11px] font-bold">
            ×
          </button>
        </div>
        <svg width="18" height="13" viewBox="0 0 18 13">
          <path d="M0 1C5 1 6 3 8.500 6.500C11 10 12 12 18 13H0Z" fill="#b5b5b5" />
          <path d="M0 1C5 1 6 3 8.500 6.500C11 10 12 12 18 12.500" fill="none" stroke="#e3b94a" strokeWidth="2" />
        </svg>
      </div>
      <IdleTab label="Render Queue" className="px-[9px]" />
      <PanelMenu gold />
    </div>
    <div className="flex min-h-0 flex-1 border-2 border-t-[#e3c169] border-r-[#e3c14a] border-b-[#e0b070] border-l-[#f7bf1c] bg-[#b2b2b2]">
      <Outline />
      <Graph />
      <div className="flex w-[14px] shrink-0 flex-col items-center bg-[#b2b2b2] pt-[27px]">
        <Icon w={11} h={14}>
          <path d="M1 1.500H10V9L5.500 12.500L1 9Z" fill="#e9e9e9" stroke="#555" />
        </Icon>
        <ToolButton label="Comp button" className="mt-[2px] h-[14px] w-[13px] border border-[#777] bg-[#c6c6c6]">
          <Icon w={11} h={11}>
            <circle cx="4" cy="4" r="3" fill="#999" />
            <path d="M5 5H10V10H5Z" fill="#ddd" />
          </Icon>
        </ToolButton>
        <ScrollButton dir="up" />
        <div className="w-[13px] flex-1 bg-[#858585]">
          <div className="h-[83%] rounded-b-xs border border-[#888] bg-linear-to-r from-[#c6c6c6] to-[#a9a9a9]" />
        </div>
        <ScrollButton dir="down" />
        <Icon w={13} h={13}>
          <path d="M2 12L12 2M6 12L12 6M9 12L12 9" stroke="#666" />
        </Icon>
      </div>
    </div>
  </section>
);

const Watermark = () => (
  <div className="pointer-events-none absolute bottom-[8px] left-[545px] flex items-center opacity-60">
    <svg width="50" height="50" viewBox="0 0 50 50" fill="none">
      <circle cx="19" cy="20" r="19" fill="#bbb" fillOpacity=".4" stroke="#aaa" strokeWidth="2" />
      <path d="M10 40A19 19 0 0 0 44 38M42 18A19 19 0 0 0 16 12" stroke="#777" strokeWidth="4" />
      <path d="M9 34C14 34 13 18 17 18C20 18 17 34 22 34C26 34 24 18 28 19C32 19 28 34 33 34H46" stroke="#3f8fd0" strokeWidth="5" />
    </svg>
    <span className="ml-1 font-['Noto_Sans_CJK_SC',sans-serif] text-[34px] leading-10 font-bold text-[#999] [text-shadow:10px_-9px_0_rgba(190,190,190,0.6)]">
      人人素材
    </span>
  </div>
);

export default function App() {
  return (
    <main className="relative flex h-screen min-w-[1100px] flex-col overflow-hidden bg-[#777] font-['Open_Sans','Liberation_Sans',sans-serif] text-[10px] leading-3 font-medium text-[#111]">
      <MenuBar />
      <TitleBar />
      <ToolBar />
      <div className="flex min-h-0 flex-1 gap-[6px] px-[2px] pt-1 pb-[6px]">
        <ProjectPanel />
        <CompPanel />
        <aside className="flex w-[182px] shrink-0 flex-col gap-[6px]">
          <InfoPanel />
          <TimeControls />
          <div className="-my-px h-[3px] w-[112px] rounded-full bg-[#aaa]" />
          <EffectsPanel />
        </aside>
      </div>
      <Timeline />
      <div className="h-1 shrink-0 bg-black" />
      <Watermark />
      <span className="pointer-events-none absolute top-[6px] left-[50px] font-['Noto_Sans_CJK_SC',sans-serif] text-[18px] leading-4 font-bold text-[#ddd] opacity-20">人人素材</span>
      {/* red no-drop cursor */}
      <svg width="14" height="14" viewBox="0 0 14 14" className="pointer-events-none absolute bottom-[170px] left-[644px]">
        <circle cx="7" cy="7" r="6" fill="#dd4a66" stroke="#a7253f" />
        <path d="M2 7L5 5V9ZM12 7L9 5V9Z" fill="#111" stroke="#fff" strokeWidth="0.500" />
        <path d="M6 7H8" stroke="#fff" />
      </svg>
    </main>
  );
}
